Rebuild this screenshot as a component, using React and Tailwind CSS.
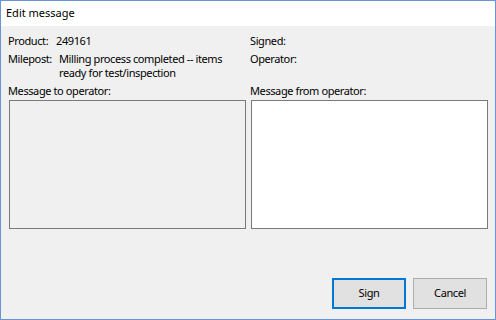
import React, { useState } from "react";

export default function App() {
	const [reply, setReply] = useState("");

	return (
		<div
			style={{ fontFamily: '"Noto Sans", "Open Sans", sans-serif' }}
			className="w-[496px] h-[320px] border border-[#6b92d3] flex flex-col text-[11px] text-black bg-[#f0f0f0]"
		>
			<div className="h-[25px] bg-white flex items-center pl-[5px] shrink-0">
				Edit message
			</div>

			<div className="flex-1 flex flex-col pl-[7px] pr-[7px] pt-[8px] pb-[10px] tracking-[-0.4px]">
				<div className="grid grid-cols-[238px_238px] gap-x-[4px]">
					<div className="flex flex-col gap-[4px] leading-[14px]">
						<div className="flex">
							<span className="w-[48px] shrink-0 whitespace-nowrap">Product:</span>
							<span>249161</span>
						</div>
						<div className="flex">
							<span className="w-[51px] shrink-0 whitespace-nowrap">Milepost:</span>
							<span className="whitespace-nowrap">
								Milling process completed -- items
								<br />
								ready for test/inspection
							</span>
						</div>
					</div>
					<div className="flex flex-col gap-[4px] leading-[14px]">
						<div>Signed:</div>
						<div>Operator:</div>
					</div>
				</div>

				<div className="grid grid-cols-[238px_238px] gap-x-[4px] mt-[4px]">
					<div className="flex flex-col gap-[2px]">
						<label className="leading-[14px]">Message to operator:</label>
						<textarea
							readOnly
							className="ml-[1px] w-[237px] h-[129px] border border-[#7a7a7a] bg-[#f0f0f0] resize-none outline-none"
						/>
					</div>
					<div className="flex flex-col gap-[2px]">
						<label className="leading-[14px]">Message from operator:</label>
						<textarea
							value={reply}
							onChange={(e) => setReply(e.target.value)}
							className="ml-[1px] w-[237px] h-[129px] border border-[#7a7a7a] bg-white resize-none outline-none"
						/>
					</div>
				</div>

				<div className="mt-auto flex justify-end gap-[7px] pr-[1px]">
					<button className="w-[74px] h-[31px] border-2 border-[#0078d7] bg-[#e1e1e1]">
						Sign
					</button>
					<button className="w-[74px] h-[31px] border border-[#adadad] bg-[#e1e1e1]">
						Cancel
					</button>
				</div>
			</div>
		</div>
	);
}
